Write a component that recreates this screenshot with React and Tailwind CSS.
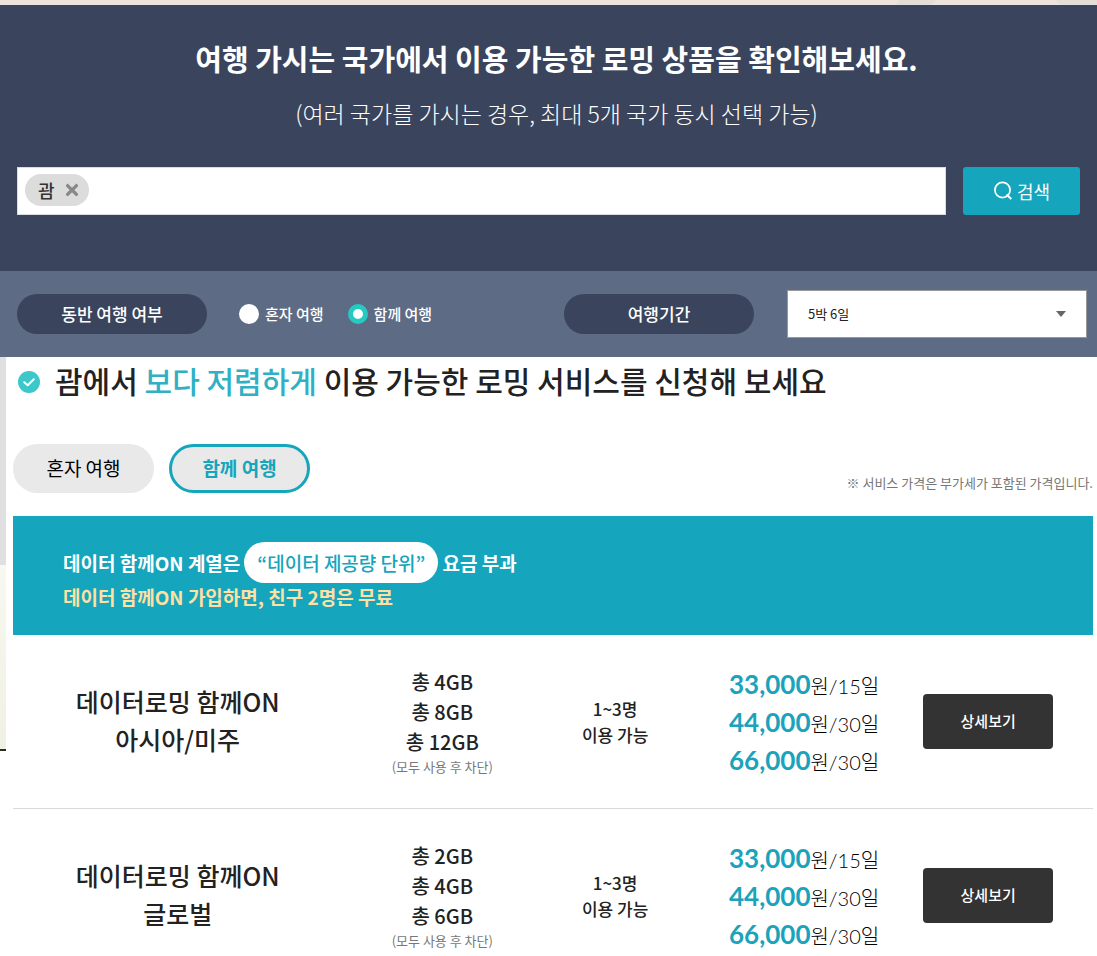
import React, { useState } from "react";
import { FaTimes } from "react-icons/fa";

const plans = [
  {
    name: ["데이터로밍 함께ON", "아시아/미주"],
    data: ["총 4GB", "총 8GB", "총 12GB"],
  },
  {
    name: ["데이터로밍 함께ON", "글로벌"],
    data: ["총 2GB", "총 4GB", "총 6GB"],
  },
];

const prices = [
  { price: "33,000", days: "15일" },
  { price: "44,000", days: "30일" },
  { price: "66,000", days: "30일" },
];

const companions = ["혼자 여행", "함께 여행"];

function SearchIcon() {
  return (
    <svg className="size-5" viewBox="0 0 20 20" fill="none" stroke="currentColor" strokeWidth="1.7" aria-hidden="true">
      <circle cx="9.5" cy="9" r="7.6" />
      <path d="M13.5 13.5 L18.3 18" strokeWidth="2" />
    </svg>
  );
}

function CheckIcon() {
  return (
    <svg className="size-[22px] shrink-0" viewBox="0 0 22 22" aria-hidden="true">
      <circle cx="11" cy="11" r="11" fill="#3cc7c9" />
      <path d="M6.2 11.2 L9.7 14.3 L15.8 8.3" fill="none" stroke="#fff" strokeWidth="2" strokeLinecap="round" strokeLinejoin="round" />
    </svg>
  );
}

function SearchHeader() {
  const [countries, setCountries] = useState(["괌"]);

  return (
    <header className="bg-[#3a455d] pt-[31px] pb-14 text-white">
      <div className="pl-4 text-center">
        <h1 className="text-[29px] leading-[44px] font-bold">
          여행 가시는 국가에서 이용 가능한 로밍 상품을 확인해보세요.
        </h1>
        <p className="mt-[15px] text-[23px] leading-9 font-light">
          (여러 국가를 가시는 경우, 최대 5개 국가 동시 선택 가능)
        </p>
      </div>

      <form className="mt-9 flex gap-[17px] px-[17px]" onSubmit={(e) => e.preventDefault()}>
        <div className="flex h-12 flex-1 items-start gap-2 border border-[#d9dce1] bg-white px-[7px] py-1.5">
          {countries.map((country) => (
            <span key={country} className="flex h-8 w-16 items-center gap-2 rounded-full bg-[#dcdcdc] pl-[13px] text-lg font-medium text-[#333]">
              {country}
              <button
                type="button"
                aria-label={`${country} 삭제`}
                onClick={() => setCountries(countries.filter((c) => c !== country))}
                className="text-lg text-[#888]"
              >
                <FaTimes />
              </button>
            </span>
          ))}
          <input type="text" aria-label="국가 검색" className="h-8 flex-1 text-lg text-[#333] outline-none" />
        </div>
        <button type="submit" className="flex h-12 w-[117px] items-center justify-center gap-1 rounded-[3px] bg-[#15a5bc] text-lg">
          <SearchIcon />
          검색
        </button>
      </form>
    </header>
  );
}

function FilterBar({ companion, setCompanion }) {
  return (
    <div className="flex h-[86px] items-center justify-between bg-[#5e6b85] pr-2.5 pl-[17px] text-white">
      <div className="flex items-center">
        <span className="flex h-10 w-[190px] items-center justify-center rounded-full bg-[#3a455d] text-[17px] font-medium">
          동반 여행 여부
        </span>
        <div className="ml-8 flex gap-6">
          {companions.map((item) => (
            <label key={item} className="flex items-center gap-1.5 text-[15px] font-medium">
              <input
                type="radio"
                name="companion"
                checked={companion === item}
                onChange={() => setCompanion(item)}
                className="size-5 appearance-none rounded-full bg-white checked:border-5 checked:border-[#25cac3]"
              />
              {item}
            </label>
          ))}
        </div>
      </div>

      <div className="flex items-center gap-[33px]">
        <label htmlFor="period" className="flex h-10 w-[190px] items-center justify-center rounded-full bg-[#3a455d] text-[17px] font-medium">
          여행기간
        </label>
        <div className="relative w-[300px]">
          <select id="period" className="h-12 w-full appearance-none border border-[#999] bg-white px-5 text-[13px] text-[#222]">
            <option>5박 6일</option>
            <option>6박 7일</option>
          </select>
          <svg className="pointer-events-none absolute top-5 right-5 h-2 w-3" viewBox="0 0 12 8" aria-hidden="true">
            <path d="M1 1 H11 L6 7 Z" fill="#666" />
          </svg>
        </div>
      </div>
    </div>
  );
}

function PlanRow({ plan }) {
  return (
    <tr className="h-[174px] text-center text-[#222] *:border-b *:border-[#d9d9d9]">
      <th scope="row" className="pb-[3px] text-[25px] leading-[38px] font-medium">
        {plan.name[0]}
        <br />
        {plan.name[1]}
      </th>
      <td>
        {plan.data.map((amount) => (
          <p key={amount} className="text-xl leading-[30px] font-medium">{amount}</p>
        ))}
        <p className="text-[13px] leading-5 text-[#777]">(모두 사용 후 차단)</p>
      </td>
      <td className="text-[17px] leading-[26px] font-medium">
        1~3명
        <br />
        이용 가능
      </td>
      <td>
        {prices.map((item) => (
          <p key={item.price} className="flex h-[38px] items-baseline justify-center font-['Lato','Noto_Sans_CJK_KR',sans-serif] text-xl leading-[38px] font-light text-black">
            <strong className="text-[26px] leading-[38px] font-bold text-[#1aa3bb]">{item.price}</strong>
            원/{item.days}
          </p>
        ))}
      </td>
      <td className="pl-[3px] text-left">
        <button type="button" className="h-[55px] w-[130px] rounded bg-[#333] text-[15px] font-medium text-white">
          상세보기
        </button>
      </td>
    </tr>
  );
}

export default function App() {
  const [companion, setCompanion] = useState("함께 여행");

  return (
    <div className="h-screen overflow-hidden bg-white font-['Noto_Sans_CJK_KR',sans-serif]">
      <svg className="block h-[5px] w-full bg-[#ede4df]" aria-hidden="true">
        <svg x="100%" overflow="visible">
          <path d="M-201 5 L-198 0 H-161 L-165 5 Z M-41 0 H0 V5 H-37 Z" fill="#e5ddd8" />
        </svg>
      </svg>

      <SearchHeader />
      <FilterBar companion={companion} setCompanion={setCompanion} />

      <div className="flex">
        {/* edge of the page behind */}
        <div className="w-1.5 shrink-0">
          <div className="h-52 bg-[#e0e0e0]"></div>
          <div className="h-[186px] border-b-2 border-[#2b2b2b] bg-linear-to-b from-[#f8f8f0] to-[#f0f0e4]"></div>
        </div>

        <main className="flex-1 pr-1 pl-[7px]">
          <h2 className="flex h-[50px] items-center gap-[15px] pl-[5px] text-3xl font-medium text-[#222]">
            <CheckIcon />
            <span className="pb-1">
              괌에서 <em className="text-[#2fb0c5] not-italic">보다 저렴하게</em> 이용 가능한 로밍 서비스를 신청해 보세요
            </span>
          </h2>

          <div className="mt-[37px] flex items-end justify-between">
            <div className="flex gap-[15px]">
              {companions.map((item) => (
                <button
                  key={item}
                  type="button"
                  onClick={() => setCompanion(item)}
                  className={
                    companion === item
                      ? "h-[49px] w-[141px] rounded-full border-3 border-[#15a5bc] bg-[#e9e9e9] text-[19px] font-bold text-[#15a5bc]"
                      : "h-[49px] w-[141px] rounded-full bg-[#e9e9e9] text-[19px] text-black"
                  }
                >
                  {item}
                </button>
              ))}
            </div>
            <p className="text-[13px] leading-5 text-[#777]">※ 서비스 가격은 부가세가 포함된 가격입니다.</p>
          </div>

          <div className="mt-[23px] bg-[#15a5bc] px-[50px] pt-[26px] pb-6 text-[19px] font-bold text-white">
            <p className="flex items-center gap-1 leading-[41px]">
              데이터 함께ON 계열은
              <span className="rounded-full bg-white px-[13px] font-medium text-[#15a5bc]">“데이터 제공량 단위”</span>
              요금 부과
            </p>
            <p className="leading-7 text-[#ffe0a3]">데이터 함께ON 가입하면, 친구 2명은 무료</p>
          </div>

          <table className="w-full table-fixed border-separate border-spacing-0">
            <colgroup>
              <col className="w-[30.5%]" />
              <col className="w-[18.5%]" />
              <col className="w-[13.5%]" />
              <col className="w-[21.5%]" />
              <col className="w-[16%]" />
            </colgroup>
            <tbody>
              {plans.map((plan) => (
                <PlanRow key={plan.name[1]} plan={plan} />
              ))}
            </tbody>
          </table>
        </main>
      </div>
    </div>
  );
}
